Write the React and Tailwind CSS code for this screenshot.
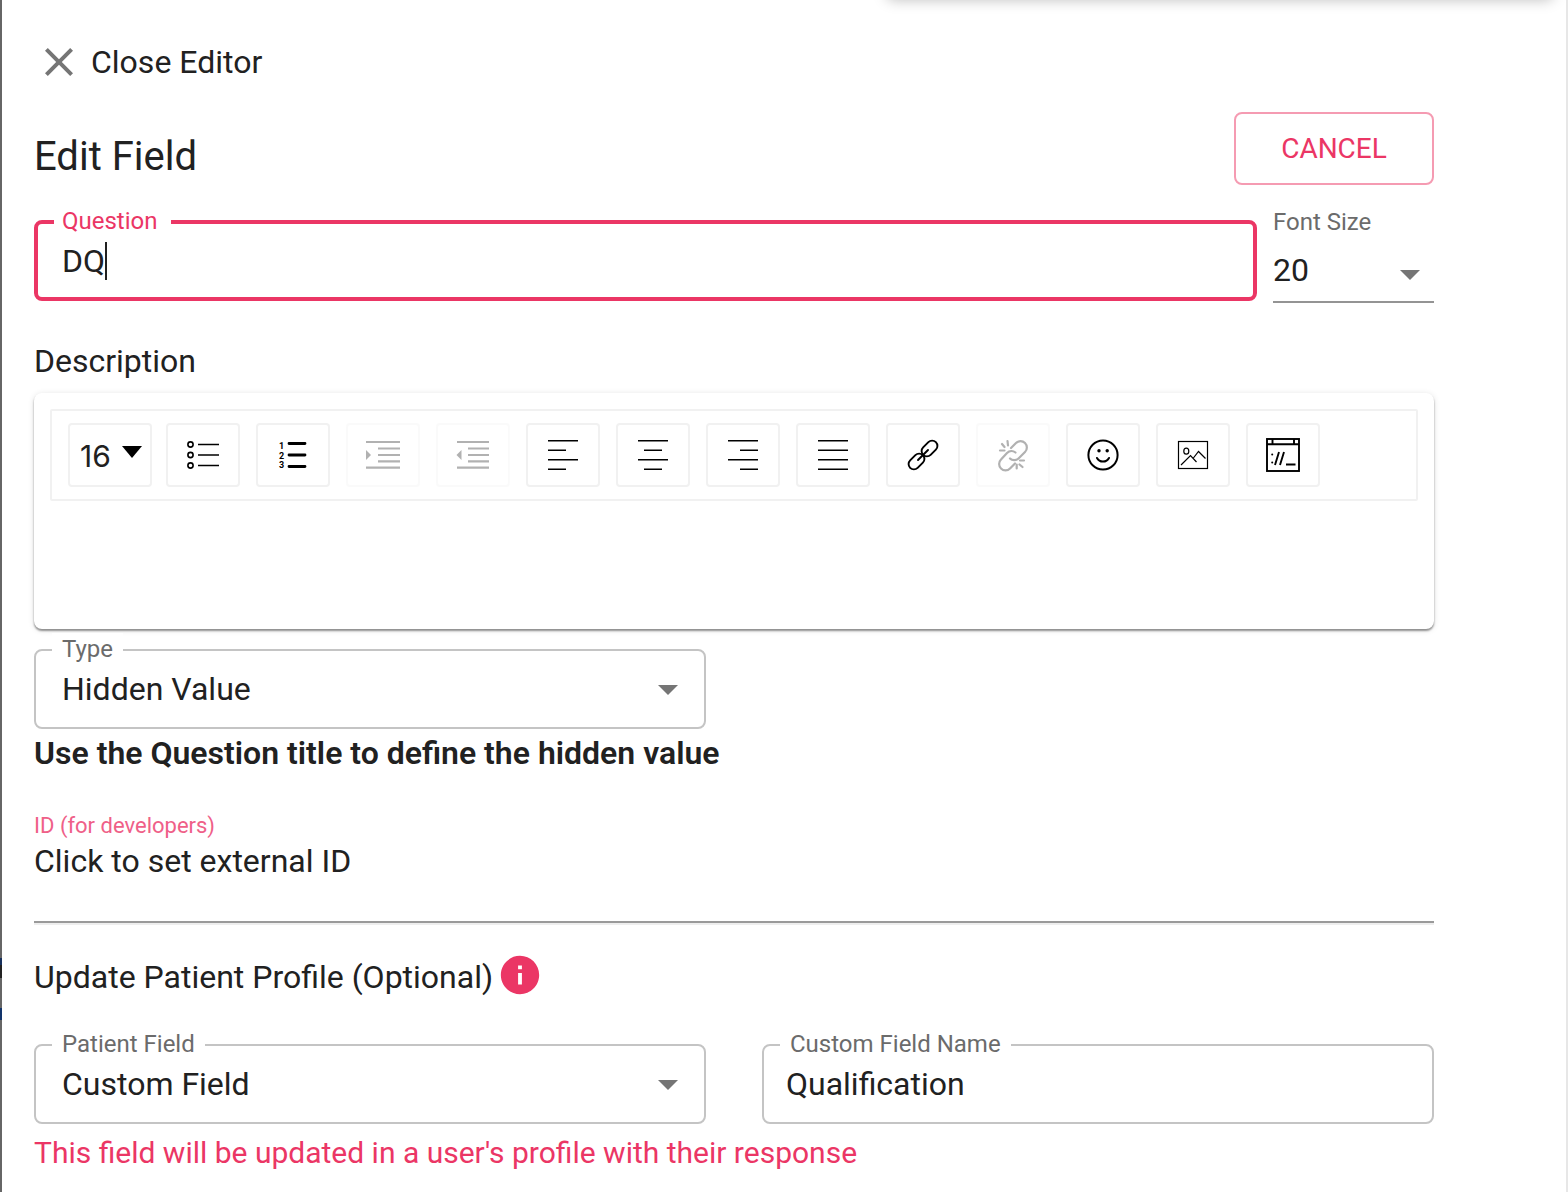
import React, { useState } from 'react';

const Icon = ({ children, strokeWidth = 1.6 }) => (
  <svg
    width="36"
    height="36"
    viewBox="0 0 36 36"
    fill="none"
    stroke="currentColor"
    strokeWidth={strokeWidth}
    aria-hidden="true"
  >
    {children}
  </svg>
);

const tools = [
  {
    name: 'Unordered list',
    icon: (
      <Icon>
        <circle cx="5.5" cy="7.5" r="2.6" />
        <circle cx="5.5" cy="18" r="2.6" />
        <circle cx="5.5" cy="28.5" r="2.6" />
        <path d="M13 7.5h21M13 18h21M13 28.5h21" />
      </Icon>
    ),
  },
  {
    name: 'Ordered list',
    icon: (
      <Icon strokeWidth={2.8}>
        <g fill="currentColor" stroke="none" fontSize="9" fontWeight="700">
          <text x="4" y="12">1</text>
          <text x="4" y="22">2</text>
          <text x="4" y="31">3</text>
        </g>
        <path d="M14 6.5h16M14 18h16M14 29.5h16" strokeLinecap="round" />
      </Icon>
    ),
  },
  {
    name: 'Indent',
    disabled: true,
    icon: (
      <Icon strokeWidth={2.2}>
        <path d="M1 5h34M13 11.5h22M13 18h22M13 24.3h22M1 30.7h34" />
        <path d="M1 13l5 5-5 5z" fill="currentColor" stroke="none" />
      </Icon>
    ),
  },
  {
    name: 'Outdent',
    disabled: true,
    icon: (
      <Icon strokeWidth={2.2}>
        <path d="M2 5h32M13 11.5h21M13 18h21M13 24.3h21M2 30.7h32" />
        <path d="M6.5 13l-5 5 5 5z" fill="currentColor" stroke="none" />
      </Icon>
    ),
  },
  { name: 'Align left', icon: <Icon><path d="M3 3.8h30M3 13.2h18M3 22.7h30M3 32.2h18" /></Icon> },
  { name: 'Align center', icon: <Icon><path d="M3 3.8h30M9 13.2h18M3 22.7h30M9 32.2h18" /></Icon> },
  { name: 'Align right', icon: <Icon><path d="M3 3.8h30M15 13.2h18M3 22.7h30M15 32.2h18" /></Icon> },
  { name: 'Justify', icon: <Icon><path d="M3 3.8h30M3 13.2h30M3 22.7h30M3 32.2h30" /></Icon> },
  {
    name: 'Link',
    icon: (
      <Icon strokeWidth={1.9}>
        <rect x="15.5" y="6.2" width="18" height="10.6" rx="5.3" transform="rotate(-45 24.5 11.5)" />
        <rect x="2.5" y="19.2" width="18" height="10.6" rx="5.3" transform="rotate(-45 11.5 24.5)" />
        <path d="M13 23l10-10" strokeLinecap="round" />
      </Icon>
    ),
  },
  {
    name: 'Unlink',
    disabled: true,
    icon: (
      <Icon strokeWidth={2.2}>
        <g strokeLinecap="round">
          <path d="M16 11l5-5a6.2 6.2 0 0 1 9 9l-6 6c-3 3-7 2.5-9 .5" />
          <path d="M20.5 15.5c-2.5-2-6-2-8.5.5l-6 6.5a6.2 6.2 0 0 0 9 9l5-5" />
          <path d="M7 7l2.5 3M5 13.5h4.5M12.5 4l.5 4.5M25 23.5h4M24.5 27.5l3 2.5M21.7 27.5v4" />
        </g>
      </Icon>
    ),
  },
  {
    name: 'Emoji',
    icon: (
      <Icon strokeWidth={2}>
        <circle cx="18" cy="18" r="14.6" />
        <circle cx="14" cy="13.7" r="1.7" fill="currentColor" stroke="none" />
        <circle cx="22.2" cy="13.7" r="1.7" fill="currentColor" stroke="none" />
        <path d="M12 21c2.5 4.8 9.5 4.8 12 0" strokeLinecap="round" />
      </Icon>
    ),
  },
  {
    name: 'Image',
    icon: (
      <Icon strokeWidth={1.2}>
        <rect x="3.5" y="4.5" width="29" height="27" />
        <ellipse cx="11.3" cy="14.2" rx="2.5" ry="3" />
        <path d="M6 28l9.500-9.500 6 6.500M18 21.500l5.500-7 7 7" />
      </Icon>
    ),
  },
  {
    name: 'Embed code',
    icon: (
      <Icon strokeWidth={1.9}>
        <rect x="2" y="2" width="32" height="32" />
        <path d="M2 7.2h32M7.5 2v5M29 2v5" />
        <path d="M10 28l4-13M15 28l4-13M21 27.5h9.5" />
        <circle cx="7.2" cy="17.5" r="1" fill="currentColor" stroke="none" />
        <circle cx="7.2" cy="25.5" r="1" fill="currentColor" stroke="none" />
      </Icon>
    ),
  },
];

const Arrow = () => (
  <svg
    className="absolute right-7 top-9 pointer-events-none"
    width="20"
    height="10"
    viewBox="0 0 20 10"
    fill="#757575"
    aria-hidden="true"
  >
    <path d="M0 0h20L10 10z" />
  </svg>
);

const labelClass = 'absolute left-[18px] -top-4 px-2.5 bg-white text-2xl/8 text-[#6b6b6b]';
const fieldClass = 'w-full h-20 rounded-lg border-2 border-[#c4c4c4] bg-transparent outline-none';

const SelectField = ({ id, label, options }) => (
  <div className="relative">
    <select id={id} className={`${fieldClass} px-[26px] appearance-none`}>
      {options.map((option) => (
        <option key={option}>{option}</option>
      ))}
    </select>
    <label htmlFor={id} className={labelClass}>{label}</label>
    <Arrow />
  </div>
);

const App = () => {
  const [question, setQuestion] = useState('DQ');
  const [fieldName, setFieldName] = useState('Qualification');

  return (
    <div className="flex min-h-screen bg-white">
      {/* sliver of the dimmed page behind the drawer */}
      <div className="w-0.5 shrink-0 bg-[linear-gradient(#666_958px,#17305c_958px,#17305c_965px,#222_965px,#222_978px,#666_978px,#666_1008px,#12346b_1008px,#12346b_1020px,#666_1020px)]" />

      <main className="relative overflow-hidden flex-1 pt-8 pl-8 pr-[132px] border-r-2 border-[#e7e7e7] font-['Roboto',sans-serif] text-[32px]/[38px] text-[#212121]">
        <div className="absolute -top-4 right-3 h-4 w-[668px] rounded-lg shadow-[0_0_14px_rgba(0,0,0,0.25)]" />

        <button type="button" className="flex items-center gap-2 h-[60px] ml-px">
          <svg width="48" height="48" viewBox="0 0 24 24" fill="#757575" aria-hidden="true">
            <path d="M19 6.41L17.59 5 12 10.59 6.41 5 5 6.41 10.59 12 5 17.59 6.41 19 12 13.41 17.59 19 19 17.59 13.41 12z" />
          </svg>
          Close Editor
        </button>

        <div className="flex items-end justify-between mt-5">
          <h2 className="text-[40px]/[56px]">Edit Field</h2>
          <button
            type="button"
            className="w-[200px] h-[73px] rounded-lg border-2 border-[#f59bb2] text-[28px] text-[#eb3665]"
          >
            CANCEL
          </button>
        </div>

        <div className="flex items-start gap-4 mt-[23px]">
          <div className="flex-1 pt-3">
            <div className="relative flex items-center h-[81px] px-6 rounded-lg border-4 border-[#eb3665]">
              <input
                id="question"
                className="field-sizing-content outline-none"
                value={question}
                onChange={(e) => setQuestion(e.target.value)}
              />
              <span className="w-0.5 h-[38px] bg-[#212121]" />
              <label
                htmlFor="question"
                className="absolute left-4 -top-[19px] pl-2 pr-3.5 bg-white text-2xl/8 text-[#eb3665]"
              >
                Question
              </label>
            </div>
          </div>
          <div className="w-[161px]">
            <label htmlFor="font-size" className="block text-2xl/7 text-[#6b6b6b]">Font Size</label>
            <div className="relative mt-[3px]">
              <select
                id="font-size"
                className="block w-full h-16 appearance-none border-b-2 border-[#949494] outline-none"
              >
                <option>20</option>
                <option>24</option>
              </select>
              <svg
                className="absolute right-3.5 top-[31px] pointer-events-none"
                width="20"
                height="10"
                viewBox="0 0 20 10"
                fill="#757575"
                aria-hidden="true"
              >
                <path d="M0 0h20L10 10z" />
              </svg>
            </div>
          </div>
        </div>

        <h3 className="mt-[34px] leading-[48px]">Description</h3>
        <section className="mt-2 p-4 rounded-lg shadow-[0_2px_2px_rgba(0,0,0,0.4),0_1px_6px_rgba(0,0,0,0.12)]">
          <div className="flex gap-4 px-4 py-3 rounded-xs border-2 border-[#f1f1f1] text-black">
            <div className="relative -mr-0.5">
              <select
                aria-label="Text size"
                className="block w-[84px] h-16 pl-2.5 pt-0.5 appearance-none rounded-sm border-2 border-[#f1f1f1] font-['Inter',sans-serif] text-[30px] text-[#212121] outline-none"
              >
                <option>16</option>
                <option>18</option>
              </select>
              <svg
                className="absolute right-2.5 top-[23px] pointer-events-none"
                width="20"
                height="12"
                viewBox="0 0 20 12"
                aria-hidden="true"
              >
                <path d="M0 0h20L10 12z" />
              </svg>
            </div>
            {tools.map((tool) => (
              <button
                key={tool.name}
                type="button"
                aria-label={tool.name}
                disabled={tool.disabled}
                className="flex items-center justify-center w-[74px] h-16 rounded-sm border-2 border-[#f1f1f1] disabled:opacity-30"
              >
                {tool.icon}
              </button>
            ))}
          </div>
          <textarea aria-label="Description" className="block w-full h-28 px-4 resize-none outline-none" />
        </section>

        <div className="grid grid-cols-2 gap-14 mt-5">
          <SelectField id="type" label="Type" options={['Hidden Value', 'Short Answer']} />
        </div>
        <p className="leading-[48px] font-semibold">Use the Question title to define the hidden value</p>

        <button type="button" className="block mt-[33px] text-left">
          <span className="block text-[22px]/8 text-[#ef6088]">ID (for developers)</span>
          Click to set external ID
        </button>
        <hr className="mt-[41px] h-1 border-t-2 border-b-2 border-t-[#9a9a9a] border-b-[#eeeeee]" />

        <div className="flex items-center gap-1 mt-[27px]">
          <h3 className="leading-[48px]">Update Patient Profile (Optional)</h3>
          <svg className="mb-1" width="46" height="46" viewBox="0 0 24 24" fill="#eb3665" aria-hidden="true">
            <path d="M12 2C6.48 2 2 6.48 2 12s4.48 10 10 10 10-4.48 10-10S17.52 2 12 2zm1 15h-2v-6h2v6zm0-8h-2V7h2v2z" />
          </svg>
        </div>

        <div className="grid grid-cols-2 gap-14 mt-[42px]">
          <SelectField id="patient-field" label="Patient Field" options={['Custom Field', 'First Name']} />
          <div className="relative">
            <input
              id="field-name"
              className={`${fieldClass} px-[22px]`}
              value={fieldName}
              onChange={(e) => setFieldName(e.target.value)}
            />
            <label htmlFor="field-name" className={labelClass}>Custom Field Name</label>
          </div>
        </div>
        <p className="mt-[5px] text-[30px]/[48px] text-[#eb3665]">
          This field will be updated in a user's profile with their response
        </p>
      </main>
    </div>
  );
};

export default App;
